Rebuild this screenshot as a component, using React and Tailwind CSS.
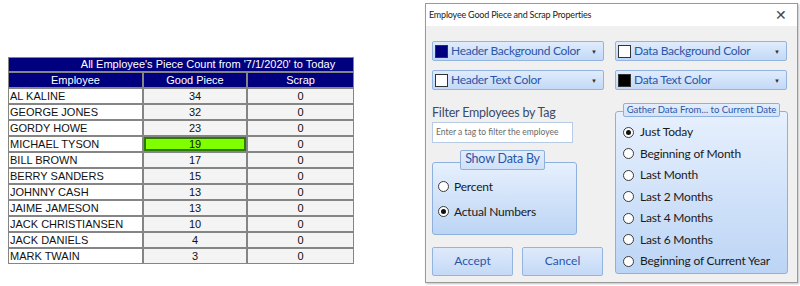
import React from 'react';

const rows = [
  ['AL KALINE', 34, 0],
  ['GEORGE JONES', 32, 0],
  ['GORDY HOWE', 23, 0],
  ['MICHAEL TYSON', 19, 0],
  ['BILL BROWN', 17, 0],
  ['BERRY SANDERS', 15, 0],
  ['JOHNNY CASH', 13, 0],
  ['JAIME JAMESON', 13, 0],
  ['JACK CHRISTIANSEN', 10, 0],
  ['JACK DANIELS', 4, 0],
  ['MARK TWAIN', 3, 0],
];

const ranges = ['Just Today', 'Beginning of Month', 'Last Month', 'Last 2 Months', 'Last 4 Months', 'Last 6 Months', 'Beginning of Current Year'];

function Radio({ checked }) {
  return (
    <span className="w-[11px] h-[11px] rounded-full border border-[#3a3a3a] bg-white flex items-center justify-center shrink-0">
      {checked && <span className="w-[5px] h-[5px] rounded-full bg-[#111]" />}
    </span>
  );
}

function ColorDrop({ swatch, label }) {
  return (
    <div className="h-[20px] w-[172px] rounded-[2px] border border-[#93b4e0] bg-gradient-to-b from-[#e0ecfc] to-[#c3d9f6] flex items-center pl-[2px] pr-[6px]">
      <span className={`w-[13px] h-[13px] shrink-0 border border-[#333] ${swatch}`} />
      <span className="ml-[3px] text-[12px] tracking-[-0.3px] leading-none text-[#2a56a8] flex-1 whitespace-nowrap">{label}</span>
      <span className="text-[6px] text-[#333]">▼</span>
    </div>
  );
}

export default function App() {
  return (
    <div className="w-[800px] h-[286px] bg-white flex overflow-hidden">
      {/* Report table */}
      <div className="ml-[8px] mt-[57px] w-[346px] self-start font-['Liberation_Sans',Arial,sans-serif] text-[11px] leading-none">
        <div className="bg-[#858585] border border-[#858585] flex flex-col gap-[2px]">
          <div className="h-[13px] bg-[#00007f] text-white flex items-center justify-center pl-[54px]">All Employee's Piece Count from '7/1/2020' to Today</div>
          <div className="h-[14px] flex gap-[2px] text-white">
            <div className="w-[133px] bg-[#00007f] flex items-center justify-center">Employee</div>
            <div className="w-[102px] bg-[#00007f] flex items-center justify-center">Good Piece</div>
            <div className="flex-1 bg-[#00007f] flex items-center justify-center">Scrap</div>
          </div>
          {rows.map(([name, good, scrap]) => (
            <div key={name} className="h-[14px] flex gap-[2px] text-[#111]">
              <div className="w-[133px] bg-white flex items-center pl-[1px]">{name}</div>
              {name === 'MICHAEL TYSON' ? (
                <div className="w-[102px] bg-[#7fff00] border-2 border-[#2d7a00] flex items-center justify-center">{good}</div>
              ) : (
                <div className="w-[102px] bg-[#f4f4f4] flex items-center justify-center">{good}</div>
              )}
              <div className="flex-1 bg-[#f4f4f4] flex items-center justify-center">{scrap}</div>
            </div>
          ))}
        </div>
      </div>

      {/* Properties dialog */}
      <div className="ml-[71px] mt-[3px] w-[373px] h-[280px] border border-[#9a9a9a] shadow-[1px_1px_2px_rgba(0,0,0,0.25)] flex flex-col font-['Lato',sans-serif]">
        <div className="h-[22px] bg-white flex items-center justify-between pl-[3px] pr-[10px]">
          <span className="text-[9px] text-[#222] tracking-[-0.2px]">Employee Good Piece and Scrap Properties</span>
          <span className="text-[14px] leading-none text-[#444]">✕</span>
        </div>
        <div className="flex-1 bg-[#f0f0f0] pl-[6px] pt-[15px]">
          <div className="flex gap-[11px]">
            <ColorDrop swatch="bg-[#00007f]" label="Header Background Color" />
            <ColorDrop swatch="bg-white" label="Data Background Color" />
          </div>
          <div className="flex gap-[11px] mt-[9px]">
            <ColorDrop swatch="bg-white" label="Header Text Color" />
            <ColorDrop swatch="bg-black" label="Data Text Color" />
          </div>

          <div className="flex mt-[13px]">
            <div className="w-[145px] flex flex-col">
              <div className="text-[12.5px] tracking-[-0.2px] leading-none text-[#3a4b6b] mt-[4px]">Filter Employees by Tag</div>
              <div className="mt-[2px] w-[141px] h-[21px] bg-white border border-[#b8cbe4] flex items-center pl-[3px] text-[8.5px] text-[#6a6a6a]">Enter a tag to filter the employee</div>
              <div className="mt-[7px] flex flex-col">
                <div className="self-center h-[20px] px-[4px] border border-[#8eb0de] bg-gradient-to-b from-[#e4eefc] to-[#cfe0f8] rounded-[2px] flex items-center text-[12.5px] tracking-[-0.2px] text-[#2a56a8] relative z-10 -ml-[4px]">Show Data By</div>
                <div className="-mt-[8px] h-[73px] rounded-[3px] border border-[#8eb0de] bg-gradient-to-b from-[#e7f0fd] to-[#bcd5f5] flex flex-col pl-[5px] pt-[18px] gap-[13px] text-[12px] tracking-[-0.2px] leading-none text-[#1a1a1a]">
                  <label className="flex items-center gap-[5px]"><Radio /> Percent</label>
                  <label className="flex items-center gap-[5px]"><Radio checked /> Actual Numbers</label>
                </div>
              </div>
              <div className="mt-[12px] w-[172px] flex gap-[9px]">
                {['Accept', 'Cancel'].map(b => (
                  <div key={b} className="w-[81px] h-[29px] shrink-0 rounded-[2px] border border-[#93b4e0] bg-gradient-to-b from-[#dfeafb] to-[#c4d9f6] flex items-center justify-center text-[12px] text-[#2a56a8]">{b}</div>
                ))}
              </div>
            </div>

            <div className="ml-[38px] w-[173px] flex flex-col">
              <div className="self-center h-[14px] px-[3px] border border-[#8eb0de] bg-gradient-to-b from-[#e4eefc] to-[#d3e3f9] rounded-[2px] flex items-center text-[9.5px] text-[#2a56a8] relative z-10">Gather Data From... to Current Date</div>
              <div className="-mt-[6px] h-[163px] rounded-[3px] border border-[#8eb0de] bg-gradient-to-b from-[#e7f0fd] to-[#bcd5f5] flex flex-col pl-[7px] pt-[14px] gap-[9px] text-[12px] tracking-[-0.2px] leading-[12.5px] text-[#1a1a1a]">
                {ranges.map((r, i) => (
                  <label key={r} className="flex items-center gap-[6px] whitespace-nowrap"><Radio checked={i === 0} /> {r}</label>
                ))}
              </div>
            </div>
          </div>
        </div>
      </div>
    </div>
  );
}
